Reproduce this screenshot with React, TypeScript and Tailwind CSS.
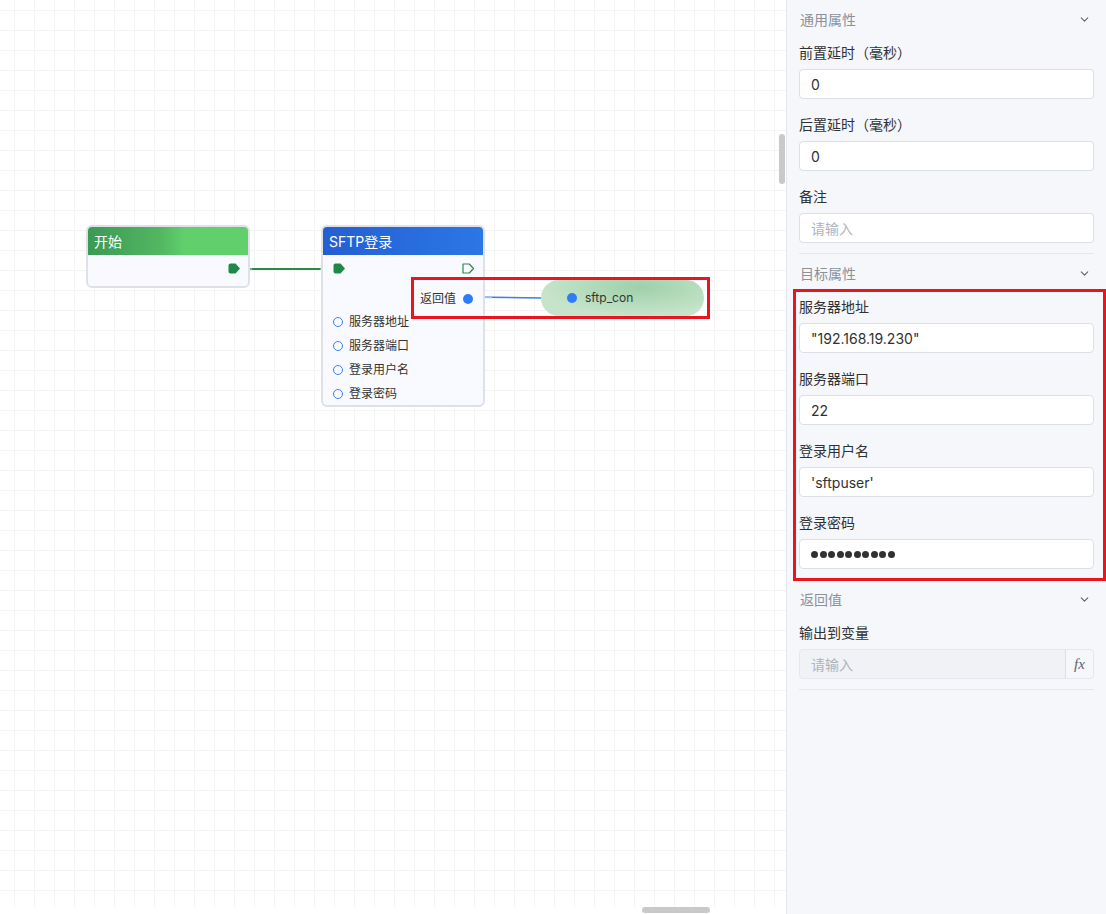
import { ChevronDown } from "lucide-react";

const FONT = "font-['Inter','Noto_Sans_CJK_SC',sans-serif]";

function PortFilled({ className }: { className?: string }) {
  return (
    <svg width="13" height="11" viewBox="0 0 13 11" className={className}>
      <path d="M2.5 0.5 H7.5 L12 5.5 L7.5 10.5 H2.5 Q0.5 10.5 0.5 8.5 V2.5 Q0.5 0.5 2.5 0.5 Z" fill="#1f8a43" />
    </svg>
  );
}

function PortOutline({ className }: { className?: string }) {
  return (
    <svg width="13" height="11" viewBox="0 0 13 11" className={className}>
      <path d="M1 1 H7.3 L11.5 5.5 L7.3 10 H1 Z" fill="none" stroke="#2a8c4a" strokeWidth="1.2" strokeLinejoin="round" />
    </svg>
  );
}

function Field({ label, value, placeholder, dots }: { label: string; value?: string; placeholder?: string; dots?: boolean }) {
  return (
    <div className="mb-4">
      <div className="h-5 leading-5 text-[14px] text-[#303133] mb-1.5">{label}</div>
      <div className="h-[30px] rounded-[4px] border border-[#dcdfe6] bg-white px-[11px] flex items-center text-[14px] text-[#303133]">
        {dots ? (
          <span className="flex gap-[1.5px]">
            {Array.from({ length: 10 }).map((_, i) => (
              <span key={i} className="w-[7px] h-[7px] rounded-full bg-[#303133]" />
            ))}
          </span>
        ) : value !== undefined ? (
          value
        ) : (
          <span className="text-[#b0b3ba]">{placeholder}</span>
        )}
      </div>
    </div>
  );
}

function SectionHeader({ title }: { title: string }) {
  return (
    <div className="h-[38px] flex items-center justify-between pl-[1px] pr-[3px] text-[14px] text-[#8c9099]">
      <span>{title}</span>
      <ChevronDown size={13} strokeWidth={2} className="text-[#606266]" />
    </div>
  );
}

export default function App() {
  return (
    <div className={`${FONT} relative w-[1106px] h-[914px] flex overflow-hidden bg-white`}>
      {/* Canvas */}
      <div className="relative flex-1 h-full">
        <div className="absolute left-0 top-0 right-0 h-[907px] bg-[linear-gradient(#f4f4f4_1px,transparent_1px),linear-gradient(90deg,#f4f4f4_1px,transparent_1px)] bg-[size:20px_20px] bg-[position:14px_10px]" />

        {/* edges */}
        <svg className="absolute left-0 top-0" width="786" height="907">
          <line x1="240" y1="269" x2="334" y2="269" stroke="#2b8a48" strokeWidth="2" />
          <line x1="240" y1="269" x2="252" y2="269" stroke="#6fb585" strokeWidth="2" />
          <line x1="320" y1="269" x2="334" y2="269" stroke="#6fb585" strokeWidth="2" />
          <line x1="468" y1="297" x2="542" y2="298" stroke="#3b7de0" strokeWidth="1.5" />
          <line x1="468" y1="297" x2="492" y2="297.3" stroke="#9cc0f5" strokeWidth="2" />
        </svg>

        {/* 开始 node */}
        <div className="absolute left-[86px] top-[225px] w-[164px] h-[63px] rounded-[6px] border-2 border-[#dfe1e8] bg-[#f8faff] overflow-hidden">
          <div className="h-[28px] px-[6px] flex items-center text-white text-[14px] bg-[linear-gradient(90deg,#3b9a55_0%,#52b661_45%,#60cf6c_60%,#60cf6c_100%)]">
            开始
          </div>
          <PortFilled className="absolute left-[140px] top-[36px]" />
        </div>

        {/* SFTP node */}
        <div className="absolute left-[321px] top-[225px] w-[164px] h-[182px] rounded-[6px] border-2 border-[#dfe1e8] bg-[#f8faff]">
          <div className="h-[28px] rounded-t-[4px] px-[6px] flex items-center text-white text-[14px] bg-[linear-gradient(90deg,#245fd2,#2b77e6)]">
            SFTP登录
          </div>
          <PortFilled className="absolute left-[10px] top-[36px]" />
          <PortOutline className="absolute left-[139px] top-[36px]" />
          <div className="absolute right-[10px] top-[63px] flex items-center gap-[7px] text-[12px] text-[#333]">
            <span>返回值</span>
            <span className="w-[10px] h-[10px] rounded-full bg-[#2f7cf6]" />
          </div>
          <div className="absolute left-[10px] top-[83px] flex flex-col">
            {["服务器地址", "服务器端口", "登录用户名", "登录密码"].map((t) => (
              <div key={t} className="h-6 flex items-center gap-[6px] text-[12px] text-[#333]">
                <span className="w-[10px] h-[10px] rounded-full border-[1.5px] border-[#3b82f6]" />
                <span>{t}</span>
              </div>
            ))}
          </div>
        </div>

        {/* variable pill */}
        <div className="absolute left-[541px] top-[280px] w-[163px] h-[36px] rounded-full bg-[radial-gradient(ellipse_at_60%_20%,#9fd0a9,#c6e4cb_70%)] flex items-center pl-[26px] gap-[8px] text-[12px] text-[#333]">
          <span className="w-[10px] h-[10px] rounded-full bg-[#2f7cf6]" />
          <span>sftp_con</span>
        </div>

        {/* scrollbars */}
        <div className="absolute left-[779px] top-[134px] w-[6px] h-[50px] rounded-full bg-[#c9c9c9]" />
        <div className="absolute left-[642px] top-[907px] w-[68px] h-[6px] rounded-full bg-[#c9c9c9]" />
      </div>

      {/* Properties panel */}
      <div className="w-[320px] h-full border-l border-[#e4e7ed] bg-[#f5f7fa] px-3">
        <div className="border-b border-[#e4e7ed]">
          <SectionHeader title="通用属性" />
          <div className="pt-[5px] pb-[10px] [&>div:last-child]:mb-0">
            <Field label="前置延时（毫秒）" value="0" />
            <Field label="后置延时（毫秒）" value="0" />
            <Field label="备注" placeholder="请输入" />
          </div>
        </div>
        <div className="border-b border-[#e4e7ed]">
          <SectionHeader title="目标属性" />
          <div className="pt-[5px] pb-[10px] [&>div:last-child]:mb-0">
            <Field label="服务器地址" value={'"192.168.19.230"'} />
            <Field label="服务器端口" value="22" />
            <Field label="登录用户名" value="'sftpuser'" />
            <Field label="登录密码" dots />
          </div>
        </div>
        <div className="border-b border-[#e4e7ed]">
          <SectionHeader title="返回值" />
          <div className="pt-[5px] pb-[10px]">
            <div className="h-5 leading-5 text-[14px] text-[#303133] mb-1.5">输出到变量</div>
            <div className="h-[30px] rounded-[4px] border border-[#e4e7ed] bg-[#f0f2f5] flex items-center text-[14px]">
              <span className="flex-1 px-[11px] text-[#b0b3ba]">请输入</span>
              <span className="w-[28px] h-full border-l border-[#dcdfe6] bg-[#f5f7fa] rounded-r-[4px] flex items-center justify-center font-['Liberation_Serif',serif] italic text-[15px] text-[#606266]">
                fx
              </span>
            </div>
          </div>
        </div>
      </div>

      {/* annotation boxes */}
      <div className="absolute left-[411px] top-[277px] w-[299px] h-[42px] border-[3px] border-[#e8141e]" />
      <div className="absolute left-[793px] top-[289px] w-[313px] h-[292px] border-[3px] border-[#e8141e]" />
    </div>
  );
}
